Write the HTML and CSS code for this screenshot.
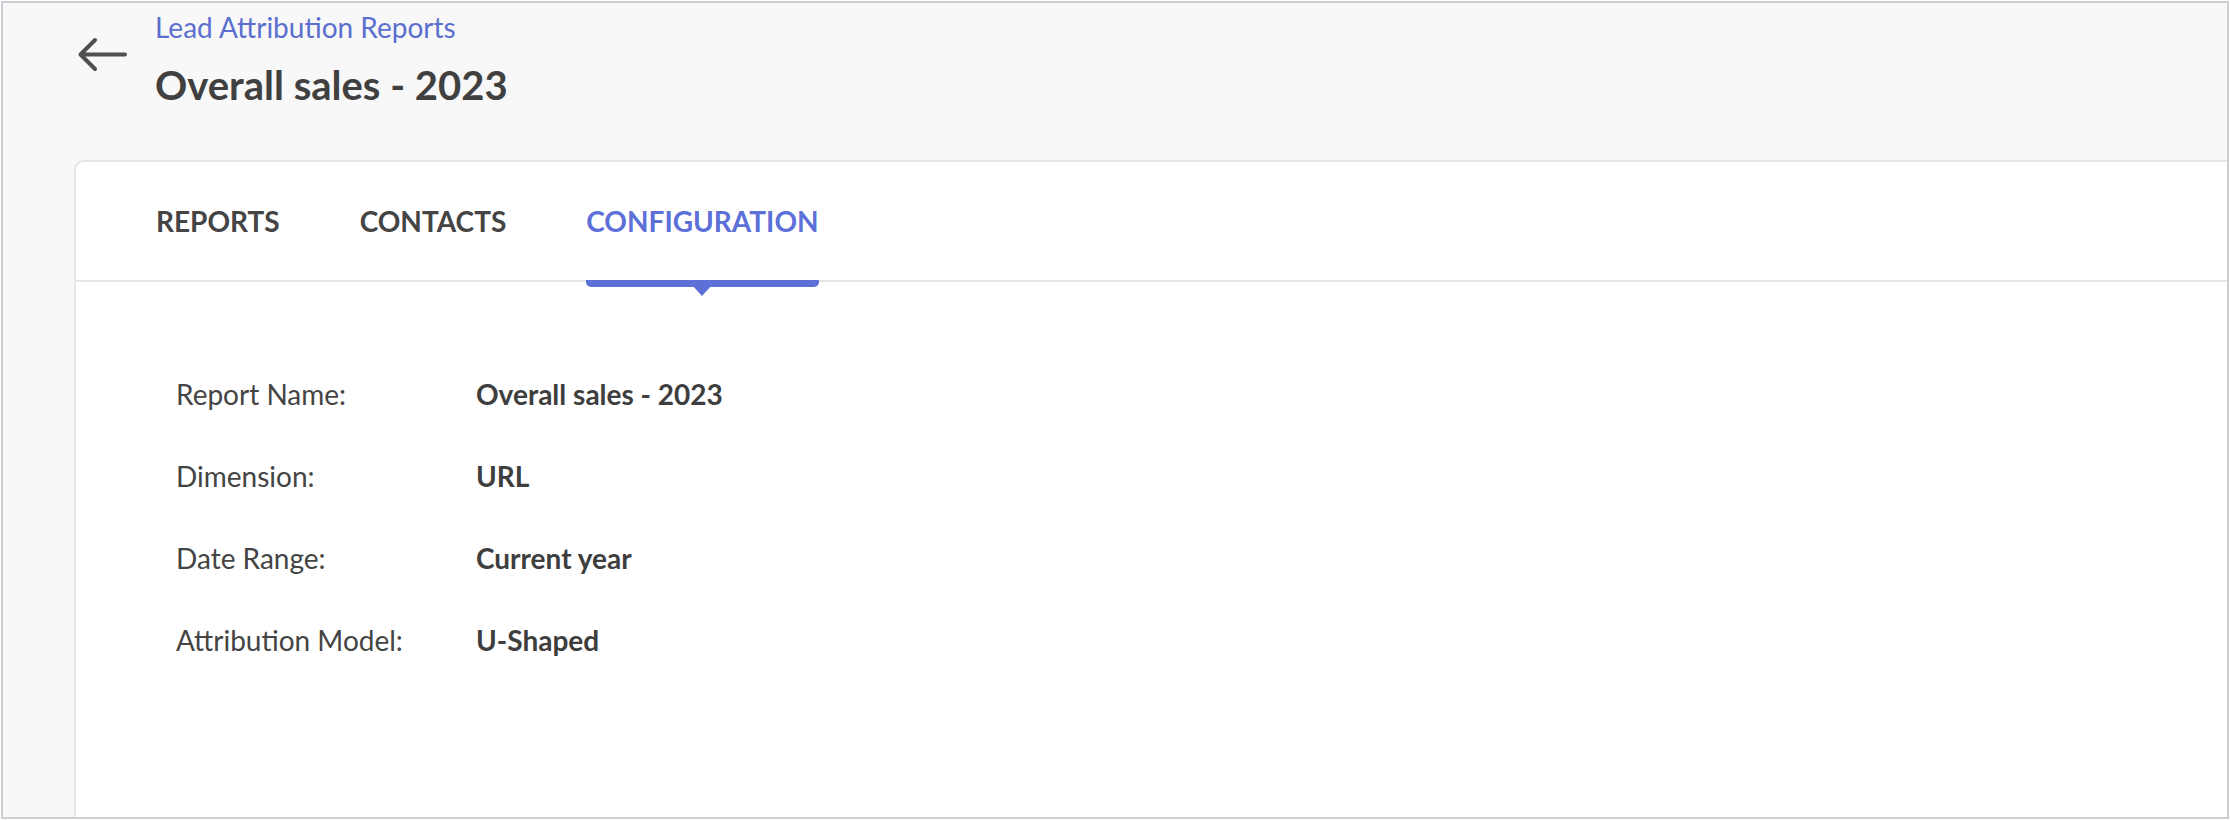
FILE: index.html
```html
<!DOCTYPE html>
<html lang="en">
<head>
<meta charset="utf-8">
<title>Overall sales - 2023</title>
<link rel="stylesheet" href="styles.css">
</head>
<body>
<div class="frame">
  <header class="page-header">
    <button class="back" aria-label="Back">
      <svg width="52" height="40" viewBox="0 0 52 40">
        <path d="M48 18.5 H4 M18 4 L3.5 18.5 L18 33" fill="none" stroke="#4f4f4f" stroke-width="4" stroke-linecap="round" stroke-linejoin="round"/>
      </svg>
    </button>
    <div class="titles">
      <a class="crumb" href="#">Lead Attribution Reports</a>
      <h1 class="title">Overall sales - 2023</h1>
    </div>
  </header>
  <main class="card">
    <nav class="tabs">
      <span class="tab">REPORTS</span>
      <span class="tab">CONTACTS</span>
      <span class="tab active">CONFIGURATION</span>
    </nav>
    <section class="config">
      <div class="row"><span class="label">Report Name:</span><span class="value">Overall sales - 2023</span></div>
      <div class="row"><span class="label">Dimension:</span><span class="value">URL</span></div>
      <div class="row"><span class="label">Date Range:</span><span class="value">Current year</span></div>
      <div class="row"><span class="label">Attribution Model:</span><span class="value">U-Shaped</span></div>
    </section>
  </main>
</div>
</body>
</html>
```
FILE: styles.css
```css
* { box-sizing: border-box; }
html, body {
  margin: 0;
  padding: 0;
  background: #ffffff;
}
body {
  font-family: Lato, "Open Sans", sans-serif;
  color: #444444;
  width: 2230px;
  height: 821px;
  overflow: hidden;
  padding: 1px;
}
.frame {
  width: 2228px;
  height: 818px;
  border: 2px solid #cdced3;
  background: #f8f8f8;
  display: flex;
  flex-direction: column;
  overflow: hidden;
}
.page-header {
  display: flex;
  align-items: flex-start;
  height: 157px;
  flex: none;
  padding-left: 74px;
}
.back {
  border: 0;
  background: none;
  padding: 0;
  margin-top: 33px;
  width: 52px;
  height: 40px;
  cursor: pointer;
}
.back svg { display: block; }
.titles {
  display: flex;
  flex-direction: column;
  margin-left: 26px;
  padding-top: 8px;
}
.crumb {
  font-size: 28px;
  line-height: 32px;
  color: #5b6fcf;
  text-decoration: none;
}
.title {
  margin: 20px 0 0;
  font-size: 40px;
  line-height: 44px;
  font-weight: 700;
  color: #404040;
}
.card {
  flex: 1;
  margin-left: 71px;
  margin-right: -4px;
  background: #ffffff;
  border: 2px solid #e6e6e6;
  border-right: 0;
  border-bottom: 0;
  border-top-left-radius: 10px;
  display: flex;
  flex-direction: column;
}
.tabs {
  display: flex;
  align-items: center;
  gap: 80px;
  height: 120px;
  padding-left: 80px;
  padding-top: 0;
  border-bottom: 2px solid #e6e6e6;
}
.tab {
  position: relative;
  font-size: 28px;
  font-weight: 700;
  color: #444444;
  line-height: 30px;
}
.tab.active { color: #5c70d8; }
.tab.active::after {
  content: "";
  position: absolute;
  left: 0;
  right: 0;
  top: 74px;
  height: 7px;
  background: #5c70d8;
  border-radius: 0 0 5px 5px;
}
.tab.active::before {
  content: "";
  position: absolute;
  left: 50%;
  top: 79px;
  margin-left: -10px;
  border-left: 10px solid transparent;
  border-right: 10px solid transparent;
  border-top: 11px solid #5c70d8;
}
.config {
  display: flex;
  flex-direction: column;
  padding: 71px 0 0 100px;
}
.row {
  display: flex;
  align-items: center;
  height: 82px;
}
.label {
  width: 300px;
  font-size: 28px;
  color: #444444;
}
.value {
  font-size: 28px;
  font-weight: 700;
  color: #3e3e3e;
}
```
